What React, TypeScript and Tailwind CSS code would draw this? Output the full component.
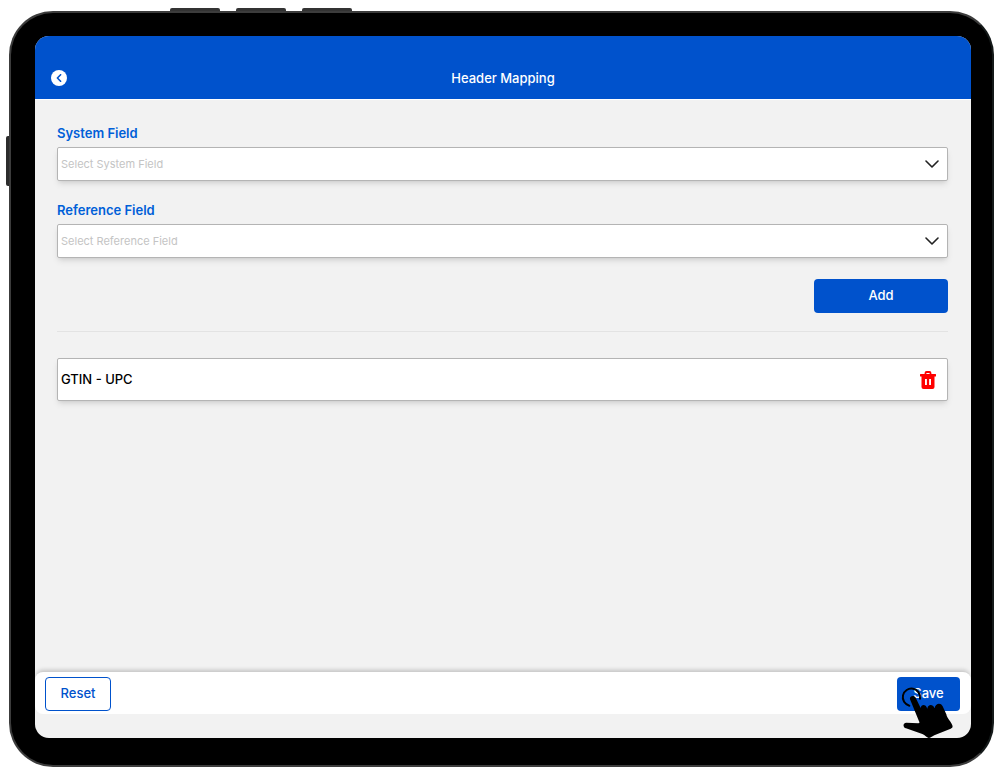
import { useState } from 'react';

interface SelectFieldProps {
  id: string;
  label: string;
  placeholder: string;
  options: string[];
  value: string;
  onChange: (value: string) => void;
}

const SelectField = ({ id, label, placeholder, options, value, onChange }: SelectFieldProps) => (
  <div className="mb-[19px]">
    <label htmlFor={id} className="block h-6 text-[13px] leading-5 font-semibold text-[#0060d8]">
      {label}
    </label>
    <div className="grid items-center">
      <select
        id={id}
        value={value}
        onChange={(e) => onChange(e.target.value)}
        className="col-start-1 row-start-1 h-[34px] w-full appearance-none rounded-xs border border-[#b4b4b4] bg-white px-[3px] text-[11px] text-[#c4c4c4] shadow-md"
      >
        <option value="">{placeholder}</option>
        {options.map((option) => (
          <option key={option} value={option}>
            {option}
          </option>
        ))}
      </select>
      <svg
        viewBox="0 0 14 8"
        className="pointer-events-none col-start-1 row-start-1 mr-[9px] h-2 w-3.5 justify-self-end"
        fill="none"
        stroke="#222"
        strokeWidth="1.6"
        strokeLinecap="round"
        strokeLinejoin="round"
      >
        <path d="M1 1l6 6 6-6" />
      </svg>
    </div>
  </div>
);

const TrashIcon = () => (
  <svg viewBox="0 0 16 18" className="block h-[18px] w-4" fill="none">
    <path d="M5.500 4V2a1 1 0 0 1 1-1h3a1 1 0 0 1 1 1v2" stroke="#f00" strokeWidth="1.800" />
    <path
      fill="#f00"
      fillRule="evenodd"
      d="M.8 3h14.400a.8.8 0 0 1 0 2.400H14.500V16a2 2 0 0 1-2 2h-9a2 2 0 0 1-2-2V5.400H.8a.8.8 0 0 1 0-2.400zM5 8v6h1.900V8zM9.100 8v6H11V8z"
    />
  </svg>
);

const TapHand = () => (
  <svg
    viewBox="60 75 165 165"
    className="pointer-events-none absolute top-2 left-[3px] h-[55px] w-[55px]"
  >
    <path
      d="M88 137A26 26 0 1 1 120 116"
      fill="none"
      stroke="#000"
      strokeWidth="6"
      strokeLinecap="round"
    />
    <path d="M90 118c-3-10 12-14 17-5l15 31c1-10 13-13 18-2l2 4c1-13 16-15 21-3l1 2c2-15 18-18 24-6l11 24c2 12 12 19 18 33 2 6 0 8-5 10l-49 20c-8 4-11 8-17 8-7-1-10-9-19-12l-49-17c-9-3-11-16 1-17l36 2c4 0 4-2 2-6z" />
  </svg>
);

export default function App() {
  const [systemField, setSystemField] = useState('');
  const [referenceField, setReferenceField] = useState('');
  const [mappings, setMappings] = useState(['GTIN - UPC']);

  const addMapping = () => {
    if (!systemField || !referenceField) return;
    setMappings((prev) => [...prev, `${systemField} - ${referenceField}`]);
    setSystemField('');
    setReferenceField('');
  };

  return (
    <div className="flex min-h-screen bg-white pt-[11px] pr-[6px] pb-[7px] pl-[9px] font-['Inter',sans-serif]">
      {/* Tablet body */}
      <div className="relative flex flex-1 rounded-[44px] border-2 border-[#3c3c3c] border-r-[#151a1a] bg-black pt-[23px] pr-[21px] pb-[27px] pl-6">
        <span className="absolute top-[123px] -left-[5px] h-[50px] w-[3px] rounded-l-xs bg-[#2c2c2c]" />
        <span className="absolute -top-[5px] left-[159px] h-[3px] w-[50px] rounded-t-xs bg-[#333]" />
        <span className="absolute -top-[5px] left-[225px] h-[3px] w-[50px] rounded-t-xs bg-[#333]" />
        <span className="absolute -top-[5px] left-[291px] h-[3px] w-[50px] rounded-t-xs bg-[#333]" />

        {/* Screen */}
        <div className="flex flex-1 flex-col overflow-hidden rounded-[14px] bg-[#f2f2f2]">
          <header className="grid grid-cols-[1fr_auto_1fr] items-center border-b border-white bg-[#0052cc] px-4 pt-8 pb-[11px]">
            <button
              type="button"
              aria-label="Back"
              className="flex h-4 w-4 items-center justify-center rounded-full bg-white"
            >
              <svg viewBox="0 0 6 8" className="h-2 w-1.5" fill="none" stroke="#0052cc" strokeWidth="1.600">
                <path d="M4.600 .8L1.400 4l3.200 3.200" strokeLinecap="round" strokeLinejoin="round" />
              </svg>
            </button>
            <h1 className="text-[13px] leading-5 font-medium text-white">Header Mapping</h1>
          </header>

          <main className="flex-1 pt-[23px] pr-[23px] pl-[22px]">
            <SelectField
              id="system-field"
              label="System Field"
              placeholder="Select System Field"
              options={['GTIN', 'Item Number', 'Description']}
              value={systemField}
              onChange={setSystemField}
            />
            <SelectField
              id="reference-field"
              label="Reference Field"
              placeholder="Select Reference Field"
              options={['UPC', 'SKU', 'Name']}
              value={referenceField}
              onChange={setReferenceField}
            />

            <div className="flex justify-end pt-0.5">
              <button
                type="button"
                onClick={addMapping}
                className="h-[34px] w-[134px] rounded-sm bg-[#0052cc] text-[13px] font-medium text-white"
              >
                Add
              </button>
            </div>

            <hr className="mt-[18px] mb-[26px] border-[#e3e3e3]" />

            <ul className="flex flex-col gap-3">
              {mappings.map((mapping) => (
                <li
                  key={mapping}
                  className="flex h-[43px] items-center justify-between rounded-xs border border-[#b4b4b4] bg-white pr-[11px] pl-[3px] text-[13px] font-medium text-black shadow-md"
                >
                  {mapping}
                  <button
                    type="button"
                    aria-label={`Delete ${mapping}`}
                    onClick={() => setMappings((prev) => prev.filter((m) => m !== mapping))}
                  >
                    <TrashIcon />
                  </button>
                </li>
              ))}
            </ul>
          </main>

          <footer className="mb-6 flex items-center justify-between rounded-lg bg-white pt-[5px] pr-[11px] pb-[3px] pl-2.5 shadow-[0_-3px_4px_-1px_rgba(0,0,0,0.2)]">
            <button
              type="button"
              onClick={() => setMappings([])}
              className="h-[34px] w-[66px] rounded-sm border border-[#0052cc] text-[13px] font-medium text-[#0052cc]"
            >
              Reset
            </button>
            <div className="relative">
              <button
                type="button"
                className="block h-[34px] w-[63px] rounded-sm bg-[#0052cc] text-[13px] font-medium text-white"
              >
                Save
              </button>
              <TapHand />
            </div>
          </footer>
        </div>
      </div>
    </div>
  );
}
